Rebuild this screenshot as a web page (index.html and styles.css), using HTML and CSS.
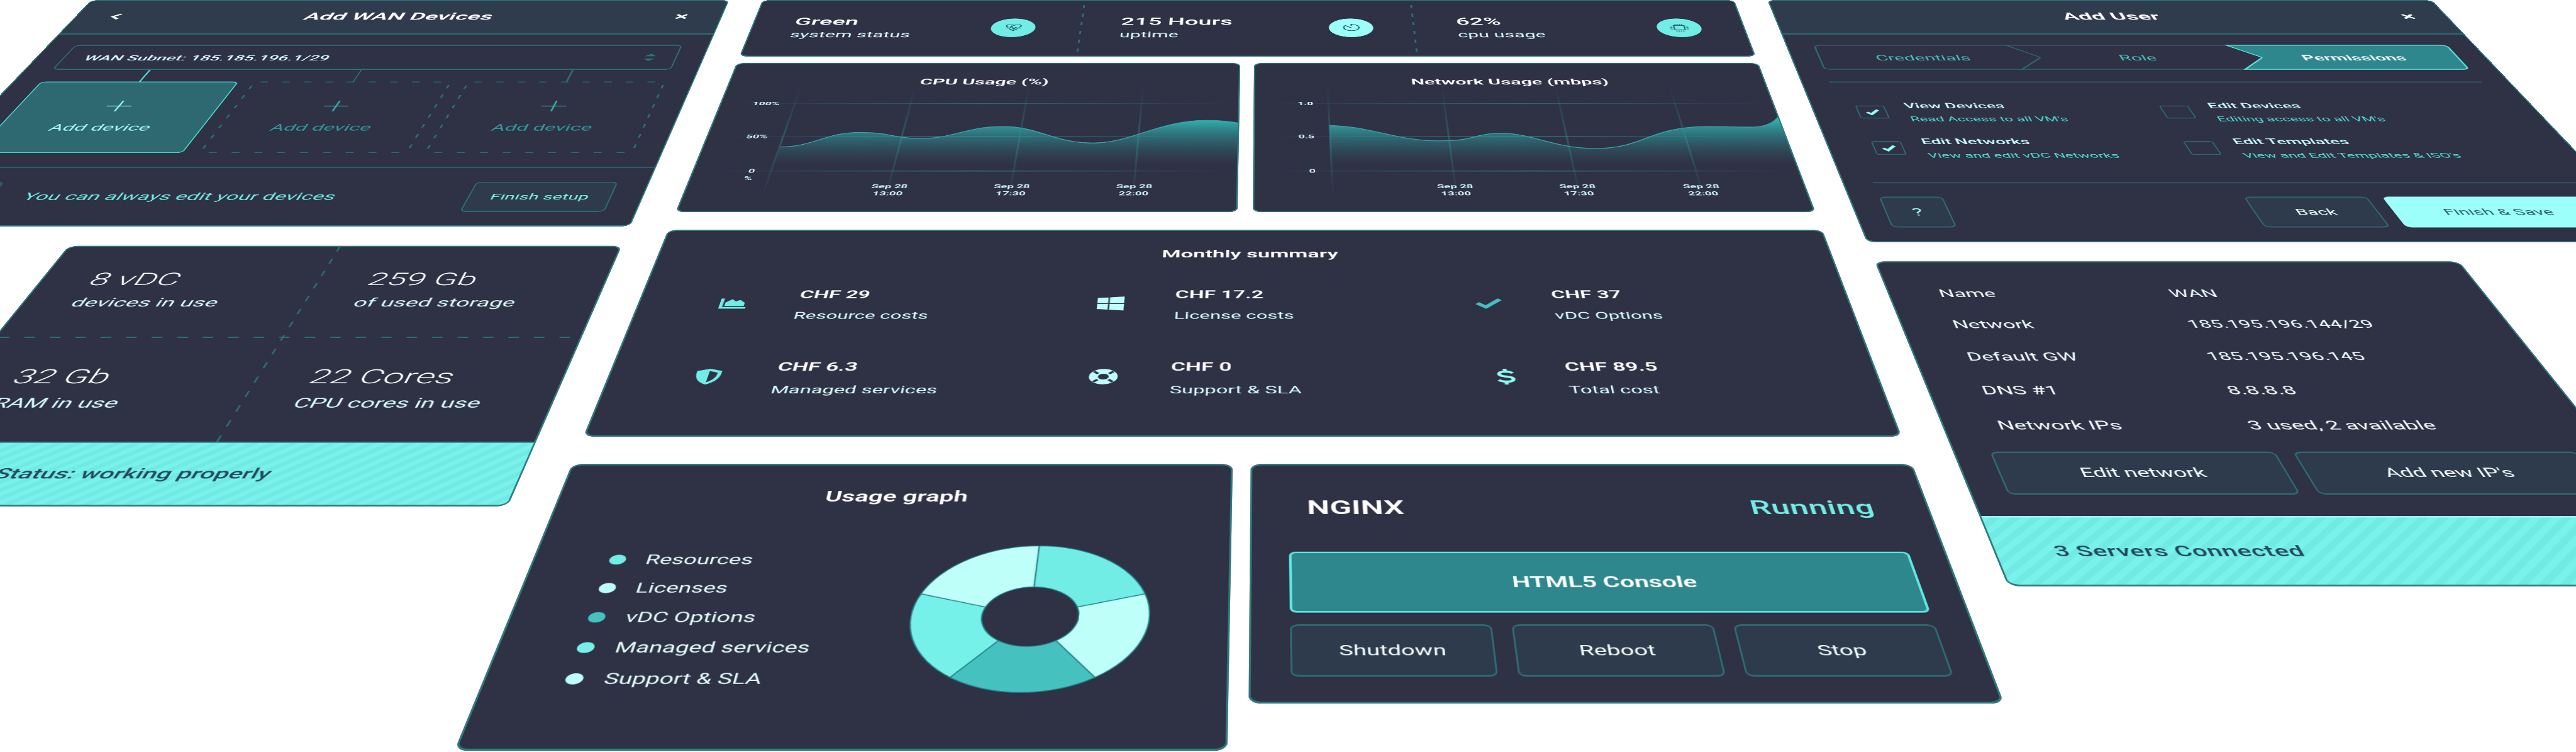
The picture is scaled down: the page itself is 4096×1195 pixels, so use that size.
FILE: index.html
```html
<!DOCTYPE html>
<html lang="en">
<head>
<meta charset="utf-8">
<title>Cloud dashboard</title>
<link rel="stylesheet" href="styles.css">
</head>
<body>
<main class="plane">

  <div class="column column-left">
    <section class="card wan">
      <header class="card-header">
        <svg class="back" width="20" height="26" viewBox="0 0 20 26"><path d="M16 3 5 13l11 10"/></svg>
        <h2>Add WAN Devices</h2>
        <svg class="close" width="22" height="22" viewBox="0 0 22 22"><path d="M3 3l16 16M19 3 3 19"/></svg>
      </header>
      <div class="wan-body">
        <div class="select">WAN Subnet: 185.185.196.1/29
          <svg width="20" height="28" viewBox="0 0 20 28"><path d="M10 0l9 10H1zM10 28l9-10H1z"/></svg>
        </div>
        <div class="connectors"><i class="on"></i><i></i><i></i></div>
        <div class="devices">
          <div class="device selected"><svg width="38" height="38" viewBox="0 0 38 38"><path d="M19 0v38M0 19h38"/></svg>Add device</div>
          <div class="device"><svg class="dash" viewBox="0 0 311 245"><rect x="1.5" y="1.5" width="308" height="242" rx="9"/></svg><svg width="38" height="38" viewBox="0 0 38 38"><path d="M19 0v38M0 19h38"/></svg>Add device</div>
          <div class="device"><svg class="dash" viewBox="0 0 311 245"><rect x="1.5" y="1.5" width="308" height="242" rx="9"/></svg><svg width="38" height="38" viewBox="0 0 38 38"><path d="M19 0v38M0 19h38"/></svg>Add device</div>
        </div>
      </div>
      <footer class="wan-footer">
        <div class="button help"></div>
        <p>You can always edit your devices</p>
        <div class="button finish">Finish setup</div>
      </footer>
    </section>

    <section class="card usage-stats">
      <div class="stat-grid">
        <div class="stat"><b>8 vDC</b><span>devices in use</span></div>
        <div class="stat"><b>259 Gb</b><span>of used storage</span></div>
        <div class="stat"><b>32 Gb</b><span>RAM in use</span></div>
        <div class="stat"><b>22 Cores</b><span>CPU cores in use</span></div>
      </div>
      <div class="band status">Status: working properly</div>
    </section>
  </div>

  <div class="column column-center">
    <section class="card overview">
      <div class="metric m1"><div><b>Green</b><span>system status</span></div>
        <div class="badge"><svg width="32" height="32" viewBox="0 0 32 32"><path d="M7 15C1 9 5 4 9.500 4c3 0 5 1.500 6.500 4 1.500-2.500 3.500-4 6.500-4C27 4 31 9 25 15M9 20l7 8 7-8M3 17h7l2.500-7 4 12 3-7 1.500 2h8"/></svg></div>
      </div>
      <div class="metric m2"><div><b>215 Hours</b><span>uptime</span></div>
        <div class="badge light"><svg width="32" height="32" viewBox="0 0 32 32"><path d="M8 6a12.500 12.500 0 1 0 8-3v5M8 11l8 5"/></svg></div>
      </div>
      <div class="metric m3"><div><b>62%</b><span>cpu usage</span></div>
        <div class="badge"><svg width="32" height="32" viewBox="0 0 32 32"><path d="M7.500 7.500h17v17h-17zM10.500 1v3.500M14.200 1v3.500M17.800 1v3.500M21.500 1v3.500M10.500 27.500V31M14.200 27.500V31M17.800 27.500V31M21.500 27.500V31M1 10.500h3.500M1 14.200h3.500M1 17.800h3.500M1 21.500h3.500M27.500 10.500H31M27.500 14.200H31M27.500 17.800H31M27.500 21.500H31"/></svg></div>
      </div>
    </section>

    <div class="charts">
      <section class="card chart">
        <h3>CPU Usage (%)</h3>
        <svg width="803" height="410" viewBox="0 87 803 410">
          <defs>
            <linearGradient id="area" gradientUnits="userSpaceOnUse" x1="0" y1="200" x2="0" y2="352"><stop offset="0" stop-color="#30b5b1"/><stop offset=".2" stop-color="#2f9497" stop-opacity=".9"/><stop offset="1" stop-color="#2d5a66" stop-opacity="0"/></linearGradient>
            <linearGradient id="across" gradientUnits="userSpaceOnUse" x1="27" y1="0" x2="794" y2="0"><stop offset="0" stop-color="#2f8f92" stop-opacity="0"/><stop offset=".5" stop-color="#2f8f92" stop-opacity=".6"/><stop offset="1" stop-color="#2f8f92" stop-opacity="0"/></linearGradient>
            <linearGradient id="down" gradientUnits="userSpaceOnUse" x1="0" y1="89" x2="0" y2="455"><stop offset="0" stop-color="#2f8f92" stop-opacity="0"/><stop offset=".5" stop-color="#2f8f92" stop-opacity=".4"/><stop offset="1" stop-color="#2f8f92" stop-opacity="0"/></linearGradient>
          </defs>
          <path class="area" d="M117 293C165 293 178 245 228 245S280 265 326 265 390 225 444 225 525 280 584 280 680 204 754 204Q785 205 803 214V370H117z"/>
          <path class="curve" d="M117 293C165 293 178 245 228 245S280 265 326 265 390 225 444 225 525 280 584 280 680 204 754 204Q785 205 803 214"/>
          <g class="rows"><path d="M27 145h767v3H27zM27 257h767v3H27zM27 369h767v3H27z"/></g>
          <g class="cols"><path d="M114 89h3v366h-3zM293 89h3v366h-3zM471 89h3v366h-3zM650 89h3v366h-3z"/></g>
          <g class="ticks-y"><text x="92" y="152">100%</text><text x="92" y="264">50%</text><text x="92" y="376">0</text><text x="92" y="399">%</text></g>
          <g class="ticks-x"><text x="296" y="424">Sep 28</text><text x="296" y="446">13:00</text><text x="474" y="424">Sep 28</text><text x="474" y="446">17:30</text><text x="652" y="424">Sep 28</text><text x="652" y="446">22:00</text></g>
        </svg>
      </section>
      <section class="card chart">
        <h3>Network Usage (mbps)</h3>
        <svg width="804" height="410" viewBox="0 87 804 410">
          <path class="area" d="M115 222C175 222 215 273 277 273S330 248 376 248 450 298 511 298C585 298 600 227 688 225C715 225 730 227 755 227Q785 228 804 191V370H115z"/>
          <path class="curve" d="M115 222C175 222 215 273 277 273S330 248 376 248 450 298 511 298C585 298 600 227 688 225C715 225 730 227 755 227Q785 228 804 191"/>
          <g class="rows"><path d="M27 145h767v3H27zM27 257h767v3H27zM27 369h767v3H27z"/></g>
          <g class="cols"><path d="M114 89h3v366h-3zM293 89h3v366h-3zM471 89h3v366h-3zM650 89h3v366h-3z"/></g>
          <g class="ticks-y"><text x="92" y="152">1.0</text><text x="92" y="264">0.5</text><text x="92" y="376">0</text></g>
          <g class="ticks-x"><text x="294" y="424">Sep 28</text><text x="294" y="446">13:00</text><text x="472" y="424">Sep 28</text><text x="472" y="446">17:30</text><text x="652" y="424">Sep 28</text><text x="652" y="446">22:00</text></g>
        </svg>
      </section>
    </div>

    <section class="card monthly">
      <h3>Monthly summary</h3>
      <div class="costs">
        <div class="cost"><svg viewBox="0 0 40 40"><path fill="#72ede6" d="M2 7h4.500v22H38v4.500H2zM9 26.500v-9l8-9 5.500 6 5.500-4 7 7.500v8.500z"/></svg><div><b>CHF 29</b><span>Resource costs</span></div></div>
        <div class="cost"><svg viewBox="0 0 40 40"><path fill="#befffa" d="M2 5.500 16.500 4v15H2zM18.500 3.700 38 1.500V19H18.500zM2 21h14.500v15L2 34.500zM18.500 21H38v17.500l-19.500-2.300z"/></svg><div><b>CHF 17.2</b><span>License costs</span></div></div>
        <div class="cost"><svg viewBox="0 0 40 40"><path fill="#45c1bf" d="M2 21.500l5-5 8.500 8L33 6.500l5 4.800L15.500 34z"/></svg><div><b>CHF 37</b><span>vDC Options</span></div></div>
        <div class="cost"><svg viewBox="0 0 40 40"><path fill="#72ede6" fill-rule="evenodd" d="M20 1 4 6.500C3 22 8 33 20 39c12-6 17-17 16-32.500zM20 6.500l11 4c.3 11-3.500 18-11 23z"/></svg><div><b>CHF 6.3</b><span>Managed services</span></div></div>
        <div class="cost"><svg viewBox="0 0 40 40"><circle cx="20" cy="20" r="12.700" fill="none" stroke="#befffa" stroke-width="11.500"/><path d="M7.500 7.500l5.500 5.500M32.500 7.500 27 13M7.500 32.500 13 27M32.500 32.500 27 27" stroke="#2f3145" stroke-width="4"/></svg><div><b>CHF 0</b><span>Support &amp; SLA</span></div></div>
        <div class="cost dollar"><svg viewBox="0 0 40 40"><path fill="none" stroke="#8ffaf3" stroke-width="5" d="M29.500 11.500C27 9 23.500 8 20 8c-4.500 0-8 2-8 5.700 0 8.300 17.500 4 17.500 12.300 0 4-4 6-9 6-4 0-7.500-1.300-10-4M20 1v7M20 32v7"/></svg><div><b>CHF 89.5</b><span>Total cost</span></div></div>
      </div>
    </section>

    <div class="bottom">
      <section class="card graph">
        <h3>Usage graph</h3>
        <div class="graph-body">
          <ul>
            <li class="c1">Resources</li>
            <li class="c2">Licenses</li>
            <li class="c3">vDC Options</li>
            <li class="c4">Managed services</li>
            <li class="c5">Support &amp; SLA</li>
          </ul>
          <svg width="267" height="267" viewBox="-133.500 -133.500 267 267">
            <g stroke="#237f85" stroke-width="1.500">
              <path fill="#72ede6" d="M0-133A133 133 0 0 1 126.500-41.100L51.400-16.700A54 54 0 0 0 0-54z"/>
              <path fill="#befffa" d="M126.500-41.100A133 133 0 0 1 78.200 107.600L31.700 43.700A54 54 0 0 0 51.400-16.700z"/>
              <path fill="#45c1bf" d="M78.200 107.600A133 133 0 0 1-78.200 107.600L-31.700 43.700A54 54 0 0 0 31.700 43.700z"/>
              <path fill="#76f1ea" d="M-78.200 107.600A133 133 0 0 1-126.500-41.100L-51.400-16.700A54 54 0 0 0-31.700 43.700z"/>
              <path fill="#befffa" d="M-126.500-41.100A133 133 0 0 1 0-133V-54A54 54 0 0 0-51.400-16.700z"/>
            </g>
          </svg>
        </div>
      </section>
      <section class="card server">
        <div class="server-title"><b>NGINX</b><b class="running">Running</b></div>
        <div class="console">HTML5 Console</div>
        <div class="actions"><div class="button">Shutdown</div><div class="button">Reboot</div><div class="button">Stop</div></div>
      </section>
    </div>
  </div>

  <div class="column column-right">
    <section class="card user">
      <header class="card-header">
        <h2>Add User</h2>
        <svg class="close" width="22" height="22" viewBox="0 0 22 22"><path d="M3 3l16 16M19 3 3 19"/></svg>
      </header>
      <svg class="steps" width="1027" height="94" viewBox="0 0 1027 94">
        <rect x="1.500" y="1.500" width="1023" height="90" rx="9"/>
        <path d="M312 1.500l41 43q3 3 0 6l-39 42"/>
        <path class="active" d="M668 1.500h347q9 0 9 9v72q0 9-9 9H669l39-41q3-3 0-6z"/>
        <text x="167" y="59">Credentials</text>
        <text x="511" y="59">Role</text>
        <text class="current" x="857" y="59">Permissions</text>
      </svg>
      <hr>
      <div class="permissions">
        <div class="permission"><i><svg viewBox="0 0 26 26"><path d="M4 13l6 7L22 5"/></svg></i><div><b>View Devices</b><span>Read Access to all VM's</span></div></div>
        <div class="permission"><i></i><div><b>Edit Devices</b><span>Editing access to all VM's</span></div></div>
        <div class="permission"><i><svg viewBox="0 0 26 26"><path d="M4 13l6 7L22 5"/></svg></i><div><b>Edit Networks</b><span>View and edit vDC Networks</span></div></div>
        <div class="permission"><i></i><div><b>Edit Templates</b><span>View and Edit Templates &amp; ISO's</span></div></div>
      </div>
      <hr>
      <footer class="user-footer">
        <div class="button help">?</div>
        <div class="button back-button">Back</div>
        <div class="button save">Finish &amp; Save</div>
      </footer>
    </section>

    <section class="card network">
      <dl>
        <dt>Name</dt><dd>WAN</dd>
        <dt>Network</dt><dd class="ip">185.195.196.144/29</dd>
        <dt>Default GW</dt><dd class="ip">185.195.196.145</dd>
        <dt>DNS #1</dt><dd>8.8.8.8</dd>
        <dt>Network IPs</dt><dd>3 used, 2 available</dd>
      </dl>
      <div class="network-actions"><div class="button">Edit network</div><div class="button">Add new IP's</div></div>
      <div class="band servers">3 Servers Connected</div>
    </section>
  </div>

</main>
</body>
</html>
```
FILE: styles.css
```css
* { box-sizing: border-box; margin: 0; padding: 0; }

body {
  width: 4096px;
  height: 1195px;
  overflow: hidden;
  background: #fff;
  color: #f6ffff;
  font-family: Roboto, "Liberation Sans", sans-serif;
}

/* The whole dashboard is a flat plane, tilted away from the viewer. */
.plane {
  display: flex;
  gap: 56px;
  width: 3925px;
  height: 1911px;
  transform-origin: 0 0;
  transform: matrix3d(0.948148, 0, 0, 0, -0.400193, 0.386797, 0, -0.000199, 0, 0, 1, 0, 145.067, 0, 0, 1);
}

.column { display: flex; flex-direction: column; flex: none; }
.column-left { width: 1070px; align-items: flex-end; gap: 56px; }
.column-center { width: 1629px; }
.column-right { width: 1114px; align-items: flex-start; gap: 54px; }

.card {
  position: relative;
  flex: none;
  overflow: hidden;
  border-radius: 13px;
  background: #2f3145;
}
/* drawn as an overlay so that the border never shifts the content */
.card::after {
  content: "";
  position: absolute;
  inset: 0;
  border: 3px solid #2b7d81;
  border-width: 3px 2.500px;
  border-radius: 13px;
  pointer-events: none;
}

h2 { font-size: 38.700px; font-weight: 600; line-height: 46px; color: #fff; }
h3 { padding-top: 51px; font-size: 30.200px; font-weight: 600; line-height: 36px; text-align: center; color: #fff; }

.card-header {
  display: grid;
  grid-template-columns: 60px 1fr 60px;
  align-items: center;
  height: 138px;
  padding: 0 38px;
  border-bottom: 4px solid #2b6a72;
  background: #2e3c4d;
  text-align: center;
}
.card-header svg { fill: none; stroke: #f4ffff; stroke-width: 5; }
.card-header h2 { grid-column: 2; }
.card-header .back { grid-column: 1; margin-left: 19px; }
.card-header .close { grid-column: 3; margin-left: 20px; }
.column-right .close { margin-left: 22px; }

.button {
  display: flex;
  flex: 1;
  align-items: center;
  justify-content: center;
  height: 92px;
  border: 3px solid #2d6d75;
  border-width: 3px 2.500px;
  border-radius: 9px;
  background: #2d3b4c;
  font-size: 26.300px;
}

/* WAN devices */
.wan { width: 1070px; height: 785px; }
.wan-body { height: 468px; padding: 40px 44px 0; border-bottom: 3px solid #2b6f76; }
.select {
  display: flex;
  align-items: center;
  justify-content: space-between;
  height: 93px;
  padding: 5px 31px 0 33px;
  border: 3.500px solid #2b727a;
  border-width: 3.500px 2.500px;
  border-radius: 9px;
  font-size: 27.600px;
  font-weight: 500;
  color: #d8fffc;
}
.select svg { margin-top: -5px; fill: #2b747a; }
.connectors, .devices { display: grid; grid-template-columns: repeat(3, 311px); gap: 24.500px; }
.connectors i { justify-self: center; width: 2.500px; height: 43px; background: #2b6f76; }
.connectors .on { background: #45d8d0; }
.device {
  position: relative;
  display: flex;
  flex-direction: column;
  align-items: center;
  gap: 37px;
  height: 245px;
  padding-top: 65px;
  border: 3px solid transparent;
  border-width: 3px 2.500px;
  border-radius: 9px;
  font-size: 31px;
  line-height: 36px;
  color: #2f9c9c;
}
.device svg { stroke: #35b5b1; stroke-width: 2.700; }
.device.selected { border-color: #45d8d0; background: #2e6870; color: #a4fff9; }
.device.selected svg { stroke: #a4fff9; }
.device .dash {
  position: absolute;
  inset: -3px -2.500px;
  width: 311px;
  height: 245px;
  fill: none;
  stroke: #2b6f76;
  stroke-width: 3;
  stroke-dasharray: 12 22;
}
.wan-footer { display: flex; align-items: center; height: 179px; padding: 0 46px 0 44px; }
.wan-footer p { flex: 1; padding-left: 48px; font-size: 30.800px; color: #72ede6; }
.wan-footer .button { flex: none; }
.wan-footer .help { width: 84px; }
.finish { width: 207px; color: #80f5ee; }

/* usage stats */
.usage-stats { width: 772px; height: 630px; }
.stat-grid {
  display: grid;
  grid-template: 246px 246px / 379px 393px;
  background:
    repeating-linear-gradient(to bottom, #2b6f76 0 14px, transparent 14px 34px) 378px 2px / 2.500px 490px no-repeat,
    repeating-linear-gradient(to right, #2b6f76 0 14px, transparent 14px 33.500px) 6px 244px / 100% 3px no-repeat;
}
.stat { padding: 66px 0 0 68px; }
.stat:nth-child(n+3) { padding-top: 69px; }
.stat b { display: block; font-size: 47px; font-weight: 300; line-height: 54px; color: #fff; }
.stat span { display: block; margin: 17px 0 0 -1px; font-size: 31.200px; line-height: 38px; color: #d8fffc; }
.band {
  display: flex;
  align-items: center;
  height: 138px;
  border-top: 3px solid #36999a;
  background: repeating-linear-gradient(135deg, #78f2eb 0 8.500px, #70eae3 8.500px 17px);
  font-weight: 500;
  color: #24485a;
}
.band.status { padding: 0 0 2px 136px; font-size: 30.600px; }

/* overview bar */
.overview { display: flex; height: 222px; margin-bottom: 24px; }
.metric {
  display: flex;
  align-items: center;
  justify-content: space-between;
  background: repeating-linear-gradient(to bottom, #2b6f76 0 13px, transparent 13px 34px) 100% 21px / 3px 184px no-repeat;
}
.m1 { width: 542px; padding: 0 76px 0 68px; }
.m2 { width: 546px; padding: 0 68px 0 63px; }
.m3 { width: 541px; padding: 0 71px 0 69px; background: none; }
.metric b { display: block; margin-bottom: 9px; font-size: 39.500px; font-weight: 500; line-height: 46px; color: #fff; }
.metric span { display: block; font-size: 31.200px; line-height: 40px; color: #d8fffc; }
.badge {
  display: flex;
  align-items: center;
  justify-content: center;
  width: 73px;
  height: 73px;
  border-radius: 50%;
  background: #72ede6;
}
.badge.light { background: #9dfff9; }
.badge svg { fill: none; stroke: #24606c; stroke-width: 2.200; }

/* charts */
.charts { display: flex; gap: 22px; margin-bottom: 52px; }
.chart { width: 803px; height: 497px; }
.chart + .chart { width: 804px; }
.chart svg { display: block; }
.area { fill: url(#area); }
.curve { fill: none; stroke: #34a5a4; stroke-width: 2.500; }
.rows { fill: url(#across); }
.cols { fill: url(#down); }
.chart text { font-size: 17px; font-weight: 600; fill: #d8fffc; }
.ticks-y { text-anchor: end; }
.ticks-x { text-anchor: middle; }

/* monthly summary */
.monthly { height: 527px; margin-bottom: 60px; }
.monthly h3 { padding-left: 14px; }
.costs { display: grid; grid-template-columns: 507px 508px 1fr; row-gap: 95px; padding: 75px 0 0 108px; }
.cost { display: flex; align-items: center; gap: 66px; height: 89px; }
.cost svg { width: 40px; height: 40px; margin-top: -5px; }
.cost b { display: block; margin-bottom: 22px; font-size: 28.700px; font-weight: 600; line-height: 34px; color: #fff; }
.cost span { display: block; font-size: 26.100px; line-height: 32px; color: #d8fffc; }
.dollar svg { position: relative; left: 8px; }

/* usage graph */
.bottom { display: flex; align-items: flex-start; gap: 22px; }
.graph { width: 803px; height: 529px; }
.graph h3 { padding-left: 3px; }
.graph-body { display: flex; justify-content: space-between; padding: 81px 89px 0 88px; }
.graph ul { list-style: none; }
.graph li { display: flex; align-items: center; gap: 23px; font-size: 26.300px; line-height: 54px; color: #e6fffd; }
.graph li::before { content: ""; width: 19px; height: 19px; border-radius: 50%; background: #72ede6; }
.graph .c2::before, .graph .c5::before { background: #befffa; }
.graph .c3::before { background: #45c1bf; }
.graph .c4::before { background: #76f1ea; }

/* server */
.server { width: 804px; height: 453px; padding: 69px 43px 0 45px; }
.server-title { display: flex; justify-content: space-between; padding: 0 22px; font-size: 38px; line-height: 46px; color: #fff; }
.server-title b { font-weight: 600; }
.server-title .running { font-size: 38.600px; font-weight: 500; letter-spacing: .7px; color: #72ede6; }
.console {
  display: flex;
  align-items: center;
  justify-content: center;
  height: 115px;
  margin: 65px 0 21px;
  padding-top: 1px;
  border: 3px solid #5fe6df;
  border-radius: 8px;
  background: #2d878c;
  font-size: 29.200px;
  font-weight: 600;
  color: #fff;
}
.actions { display: flex; gap: 22px; }

/* add user */
.user { width: 1114px; height: 831px; }
.steps { display: block; margin: 40px 0 0 44px; overflow: visible; }
.steps rect, .steps path { fill: none; stroke: #2b6a72; stroke-width: 2.700; }
.steps .active { fill: #2d878c; stroke: #5fe6df; }
.steps text { font-size: 30px; text-anchor: middle; fill: #45c1bf; }
.steps .current { font-size: 29.500px; font-weight: 600; fill: #fff; }
hr { height: 3px; margin: 42px 44px 0; border: 0; background: #2b6f76; }
.permissions { display: grid; grid-template-columns: 469px 1fr; row-gap: 45px; height: 337px; padding: 68px 0 0 68px; align-content: start; }
.permissions + hr { margin-top: -2px; }
.permission { display: flex; gap: 31px; height: 76px; }
.permission i {
  display: flex;
  align-items: center;
  justify-content: center;
  width: 45px;
  height: 45px;
  margin-top: 14px;
  border: 3px solid #2b6a72;
  border-width: 3px 2.500px;
  border-radius: 5px;
}
.permission svg { width: 26px; height: 26px; fill: none; stroke: #8ffff8; stroke-width: 5.500; }
.permission b { display: block; margin-bottom: 17px; font-size: 26px; font-weight: 500; line-height: 30px; color: #c9fffb; }
.permission span { display: block; font-size: 22.700px; line-height: 28px; color: #50dcd5; }
.user-footer { display: flex; justify-content: flex-end; gap: 22px; padding: 41px 44px 0; }
.user-footer .button { flex: none; }
.user-footer .help { width: 92px; margin-right: auto; font-size: 31px; color: #a4fff9; }
.user-footer .back-button { width: 178px; }
.user-footer .save { width: 299px; border-color: #9dfff9; background: #9dfff9; color: #24606c; }

/* network */
.network { width: 807px; height: 743px; padding-top: 47px; }
dl { display: grid; grid-template-columns: 312px 1fr; padding-left: 69px; font-size: 28.500px; line-height: 81px; color: #f0fffe; }
.ip { font-size: 27px; }
.network-actions { display: flex; gap: 22px; padding: 18px 43px 44px 45px; }
.network-actions .button { font-size: 27.400px; }
.band.servers { padding: 0 0 2px 70px; border-color: #9dfff9; font-size: 29.800px; letter-spacing: .6px; }
```
